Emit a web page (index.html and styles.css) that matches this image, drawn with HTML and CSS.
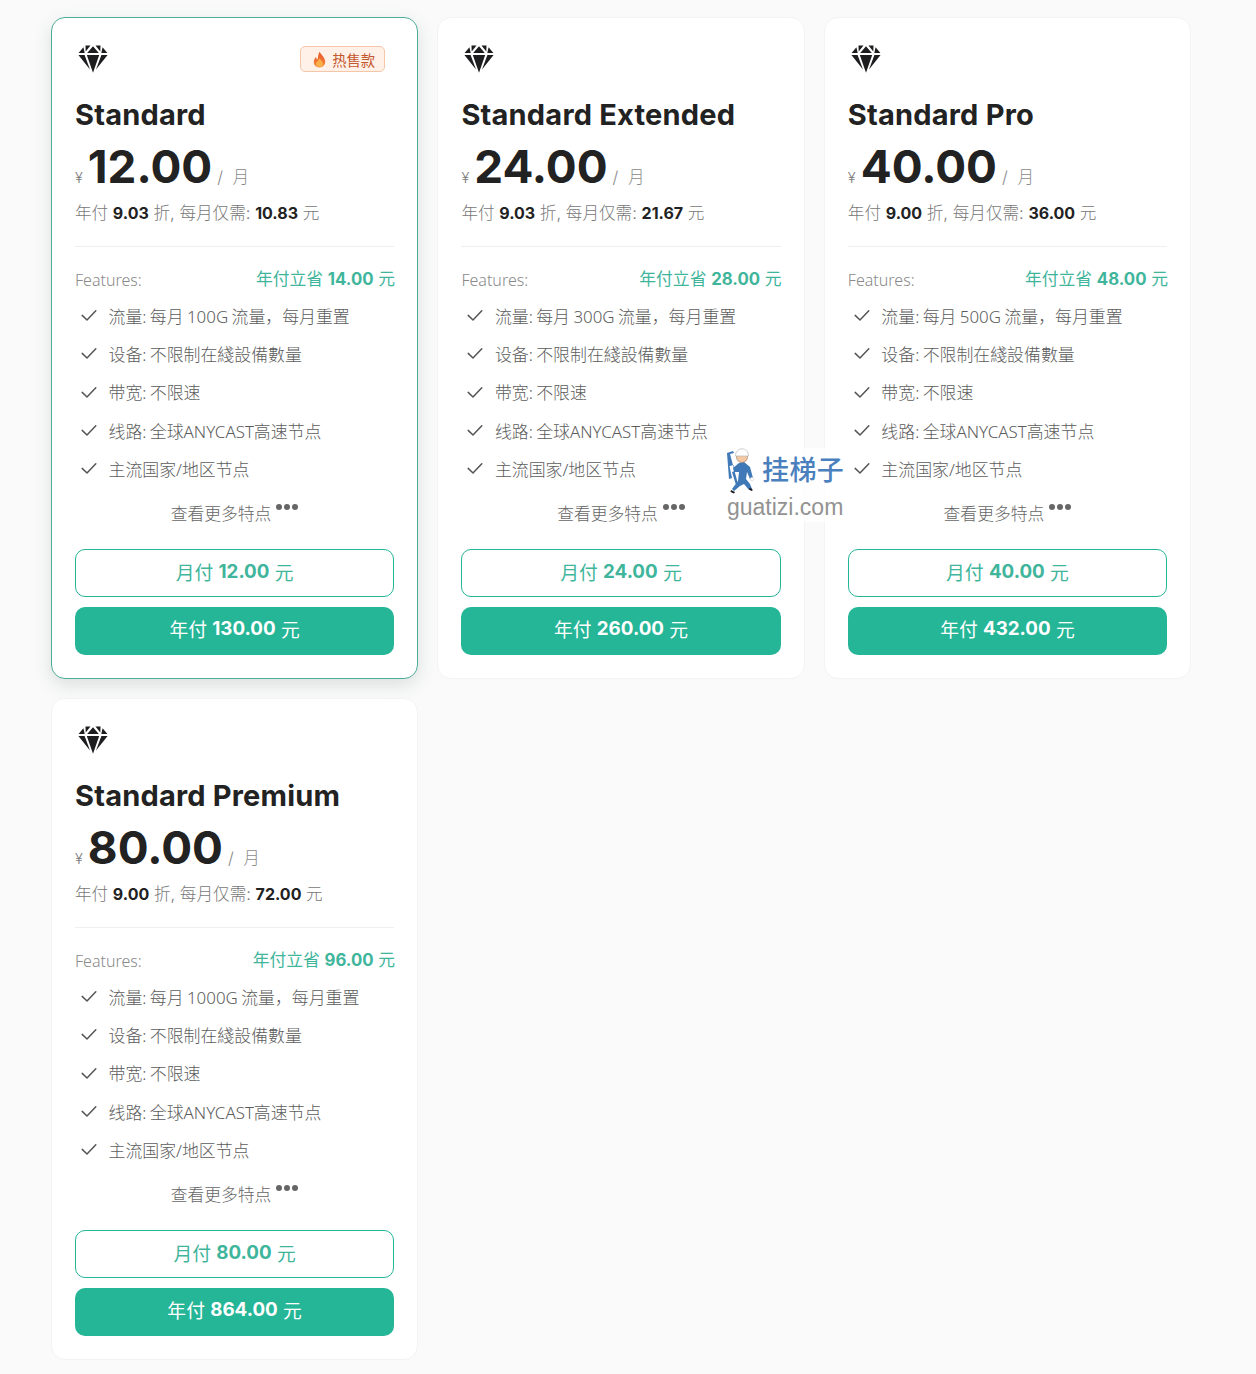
FILE: index.html
```html
<!DOCTYPE html>
<html lang="zh">
<head>
<meta charset="utf-8">
<title>Plans</title>
<link rel="stylesheet" href="styles.css">
</head>
<body>
<svg class="defs" width="0" height="0" aria-hidden="true">
  <symbol id="gem" viewBox="0 0 30 28">
    <path d="M15 1.200 20.800 8H9.200Z M7.500.6H12.500L7.700 6.400Z M22.500.6H17.500L22.300 6.400Z M5.400 2.200 6.700 8H.6Z M24.600 2.200 23.300 8H29.400Z M8.800 10H21.200L15 27.800Z M.4 10H6.600L12 24.600Z M29.600 10H23.400L18 24.600Z" fill="#1d1d1f"/>
  </symbol>
  <symbol id="check" viewBox="0 0 16 16">
    <path d="M1.200 8.400 6 13 14.800 3.800" fill="none" stroke="#555" stroke-width="1.500" stroke-linecap="round" stroke-linejoin="round"/>
  </symbol>
  <linearGradient id="flame-grad" x1="0" y1="0" x2="0" y2="1">
    <stop offset="0" stop-color="#e9552a"/>
    <stop offset="1" stop-color="#f58a3a"/>
  </linearGradient>
</svg>

<main class="plans">

  <article class="card card-active">
    <div class="card-top">
      <svg class="gem"><use href="#gem"/></svg>
      <span class="hot">
        <svg class="flame" viewBox="0 0 12 16"><path d="M6.200.6C6.800 3 11.400 5.800 11.400 10.200 11.400 13.400 9 15.500 6 15.500 3 15.500.6 13.400.6 10.400.6 8.200 1.900 6.600 2.900 5.700 3 7 3.500 7.800 4.200 8 4.600 5.600 4.800 2.800 6.200.6Z" fill="url(#flame-grad)"/><path d="M6.200 6.500C6.600 8.500 9.300 9.800 9.300 12.200 9.300 13.900 7.700 15 6 15 4.300 15 2.700 13.900 2.700 12.300 2.700 10 5.500 9 6.200 6.500Z" fill="#f9b04a"/></svg>
        热售款
      </span>
    </div>
    <h2 class="name">Standard</h2>
    <div class="price"><span class="yen">¥</span><span class="amount">12.00</span><span class="per">/ 月</span></div>
    <p class="discount">年付 <b>9.03</b> 折, 每月仅需: <b>10.83</b> 元</p>
    <hr class="rule">
    <div class="features-head"><span class="features-label">Features:</span><span class="save">年付立省 <b>14.00</b> 元</span></div>
    <ul class="features">
      <li><svg class="check"><use href="#check"/></svg>流量: 每月 100G 流量，每月重置</li>
      <li><svg class="check"><use href="#check"/></svg>设备: 不限制在綫設備數量</li>
      <li><svg class="check"><use href="#check"/></svg>带宽: 不限速</li>
      <li><svg class="check"><use href="#check"/></svg>线路: 全球ANYCAST高速节点</li>
      <li><svg class="check"><use href="#check"/></svg>主流国家/地区节点</li>
    </ul>
    <div class="more">查看更多特点<span class="dots"><i></i><i></i><i></i></span></div>
    <div class="btn btn-outline">月付 <b>12.00</b> 元</div>
    <div class="btn btn-solid">年付 <b>130.00</b> 元</div>
  </article>

  <article class="card">
    <div class="card-top"><svg class="gem"><use href="#gem"/></svg></div>
    <h2 class="name">Standard Extended</h2>
    <div class="price"><span class="yen">¥</span><span class="amount">24.00</span><span class="per">/ 月</span></div>
    <p class="discount">年付 <b>9.03</b> 折, 每月仅需: <b>21.67</b> 元</p>
    <hr class="rule">
    <div class="features-head"><span class="features-label">Features:</span><span class="save">年付立省 <b>28.00</b> 元</span></div>
    <ul class="features">
      <li><svg class="check"><use href="#check"/></svg>流量: 每月 300G 流量，每月重置</li>
      <li><svg class="check"><use href="#check"/></svg>设备: 不限制在綫設備數量</li>
      <li><svg class="check"><use href="#check"/></svg>带宽: 不限速</li>
      <li><svg class="check"><use href="#check"/></svg>线路: 全球ANYCAST高速节点</li>
      <li><svg class="check"><use href="#check"/></svg>主流国家/地区节点</li>
    </ul>
    <div class="more">查看更多特点<span class="dots"><i></i><i></i><i></i></span></div>
    <div class="btn btn-outline">月付 <b>24.00</b> 元</div>
    <div class="btn btn-solid">年付 <b>260.00</b> 元</div>
  </article>

  <article class="card">
    <div class="card-top"><svg class="gem"><use href="#gem"/></svg></div>
    <h2 class="name">Standard Pro</h2>
    <div class="price"><span class="yen">¥</span><span class="amount">40.00</span><span class="per">/ 月</span></div>
    <p class="discount">年付 <b>9.00</b> 折, 每月仅需: <b>36.00</b> 元</p>
    <hr class="rule">
    <div class="features-head"><span class="features-label">Features:</span><span class="save">年付立省 <b>48.00</b> 元</span></div>
    <ul class="features">
      <li><svg class="check"><use href="#check"/></svg>流量: 每月 500G 流量，每月重置</li>
      <li><svg class="check"><use href="#check"/></svg>设备: 不限制在綫設備數量</li>
      <li><svg class="check"><use href="#check"/></svg>带宽: 不限速</li>
      <li><svg class="check"><use href="#check"/></svg>线路: 全球ANYCAST高速节点</li>
      <li><svg class="check"><use href="#check"/></svg>主流国家/地区节点</li>
    </ul>
    <div class="more">查看更多特点<span class="dots"><i></i><i></i><i></i></span></div>
    <div class="btn btn-outline">月付 <b>40.00</b> 元</div>
    <div class="btn btn-solid">年付 <b>432.00</b> 元</div>
  </article>

  <article class="card">
    <div class="card-top"><svg class="gem"><use href="#gem"/></svg></div>
    <h2 class="name">Standard Premium</h2>
    <div class="price"><span class="yen">¥</span><span class="amount">80.00</span><span class="per">/ 月</span></div>
    <p class="discount">年付 <b>9.00</b> 折, 每月仅需: <b>72.00</b> 元</p>
    <hr class="rule">
    <div class="features-head"><span class="features-label">Features:</span><span class="save">年付立省 <b>96.00</b> 元</span></div>
    <ul class="features">
      <li><svg class="check"><use href="#check"/></svg>流量: 每月 1000G 流量，每月重置</li>
      <li><svg class="check"><use href="#check"/></svg>设备: 不限制在綫設備數量</li>
      <li><svg class="check"><use href="#check"/></svg>带宽: 不限速</li>
      <li><svg class="check"><use href="#check"/></svg>线路: 全球ANYCAST高速节点</li>
      <li><svg class="check"><use href="#check"/></svg>主流国家/地区节点</li>
    </ul>
    <div class="more">查看更多特点<span class="dots"><i></i><i></i><i></i></span></div>
    <div class="btn btn-outline">月付 <b>80.00</b> 元</div>
    <div class="btn btn-solid">年付 <b>864.00</b> 元</div>
  </article>

</main>

<aside class="watermark">
  <svg class="worker" viewBox="0 0 32 46">
    <path d="M3 5 9 3 10 5 6 6 14 36 12 37 8 24 11 23 9.500 17 5.500 18 8 30 5 31Z" fill="#3f79b8"/>
    <path d="M9 20 15 15 20 14 26 19 29 30 26 31 23 24 22 31 26 36 28 41 25 42 20 36 16 38 10 43 8 41 14 33 15 24 10 24Z" fill="#3f79b8"/>
    <circle cx="18" cy="9" r="5.500" fill="#f4c9a4" stroke="#7a5a44" stroke-width=".5"/>
    <path d="M11.500 8C11.500 3.500 14.500 .8 18 .8 21.500 .8 24.500 3.500 24.500 8Z" fill="#fff" stroke="#b8b8b8" stroke-width=".7"/>
    <circle cx="28" cy="31" r="1.800" fill="#fff" stroke="#bbb" stroke-width=".4"/>
    <path d="M7 42 11 44 10 45.500 6.500 44ZM26 39.500 29 42 27.500 43 25 41.500Z" fill="#1d1d1f"/>
  </svg>
  <span class="wm-cn">挂梯子</span>
  <span class="wm-en">guatizi.com</span>
</aside>
</body>
</html>
```
FILE: styles.css
```css
* { box-sizing: border-box; }
html, body { margin: 0; padding: 0; }
body {
  position: relative;
  min-height: 1374px;
  background: #fafafa;
  color: #1d1d1f;
  font-family: Inter, "Noto Sans CJK SC", sans-serif;
  font-size: 16px;
}
.defs { position: absolute; }

.plans {
  display: grid;
  grid-template-columns: repeat(3, 1fr);
  gap: 19px 19.300px;
  width: 1140px;
  margin-left: 51px;
  padding-top: 17px;
}
.card {
  height: 662px;
  padding: 24px 23px 0;
  background: #fff;
  border: 1px solid #f3f3f3;
  border-radius: 14px;
  display: flex;
  flex-direction: column;
}
.card-active {
  border-color: #4cae98;
  box-shadow: 0 6px 18px rgba(60, 90, 85, .16);
}

.card-top {
  height: 33px;
  display: flex;
  justify-content: space-between;
  align-items: flex-start;
}
.gem { width: 30px; height: 28px; margin: 3px 0 0 3px; display: block; }
.hot {
  margin: 4px 9px 0 0;
  height: 26px;
  padding: 0 9px 0 12px;
  display: inline-flex;
  align-items: center;
  gap: 6px;
  font-size: 14.300px;
  font-weight: 400;
  color: #c4572d;
  background: #fff1e8;
  border: 1px solid #f5c7a8;
  border-radius: 5px;
}
.flame { width: 13px; height: 17px; }

.name {
  margin: 20px 0 0;
  font-size: 29px;
  letter-spacing: .2px;
  line-height: 40px;
  font-weight: 700;
  color: #222;
}
.price {
  height: 54px;
  margin-top: 5px;
  display: flex;
  align-items: baseline;
  color: #222;
  line-height: 54px;
}
.yen { font-size: 14.500px; color: #7b7b7b; margin-right: 5px; font-weight: 300; }
.amount { font-size: 45.800px; font-weight: 700; }
.per { font-size: 16.600px; color: #8a8a8a; margin-left: 5px; font-weight: 300; word-spacing: 5px; }

.discount {
  margin: 6px 0 0;
  font-size: 16.600px;
  line-height: 26px;
  font-weight: 300;
  color: #777;
  white-space: nowrap;
}
.discount b { font-size: 16px; font-weight: 700; color: #222; }

.rule {
  margin: 20px 0 0;
  border: 0;
  border-top: 1px solid #efefef;
}
.features-head {
  margin: 20px -1px 0 0;
  display: flex;
  justify-content: space-between;
  align-items: center;
  height: 26px;
  line-height: 26px;
}
.features-label { font-family: "Noto Sans", "Noto Sans CJK SC", sans-serif; font-size: 16px; color: #8a8a8a; font-weight: 300; }
.save { font-size: 16.800px; color: #3fb59c; font-weight: 400; margin-bottom: 2px; }
.save b { font-weight: 700; }

.features {
  list-style: none;
  margin: 3px 0 0;
  padding: 0;
}
.features li {
  height: 38.300px;
  display: flex;
  align-items: center;
  font-family: "Noto Sans", "Noto Sans CJK SC", sans-serif;
  font-size: 16.900px;
  font-weight: 300;
  word-spacing: -1px;
  color: #5c5c5c;
  white-space: nowrap;
}
.check { width: 16px; height: 16px; margin: 0 11.500px 0 6px; flex: none; }

.more {
  margin-top: 11px;
  height: 30px;
  display: flex;
  justify-content: center;
  align-items: center;
  font-size: 16.800px;
  font-weight: 300;
  color: #666;
}
.dots { display: inline-flex; gap: 2px; margin: -12px 0 0 5px; }
.dots i { width: 6px; height: 6px; border-radius: 50%; background: #666; }

.btn {
  height: 48px;
  display: flex;
  justify-content: center;
  align-items: center;
  gap: .28em;
  padding-bottom: 3px;
  border-radius: 10px;
  font-size: 18.800px;
  font-weight: 400;
}
.btn b { font-weight: 700; }
.btn-outline {
  margin-top: 21px;
  background: #fff;
  border: 1px solid #25b597;
  color: #3fb59c;
}
.btn-solid {
  margin-top: 10px;
  padding-bottom: 5px;
  background: #25b597;
  color: #fff;
}

.watermark {
  position: absolute;
  left: 724px;
  top: 448px;
  width: 125px;
  height: 74px;
  background: rgba(255, 255, 255, .72);
}
.worker { position: absolute; left: 0; top: 0; width: 32px; height: 46px; }
.wm-cn {
  position: absolute;
  left: 38px;
  top: 4px;
  font-size: 27px;
  line-height: 38px;
  font-weight: 500;
  letter-spacing: .4px;
  color: #4a80bd;
  white-space: nowrap;
}
.wm-en {
  position: absolute;
  left: 3px;
  top: 45px;
  font-family: "Liberation Sans", sans-serif;
  font-size: 23px;
  line-height: 28px;
  color: #929292;
  white-space: nowrap;
}
```
